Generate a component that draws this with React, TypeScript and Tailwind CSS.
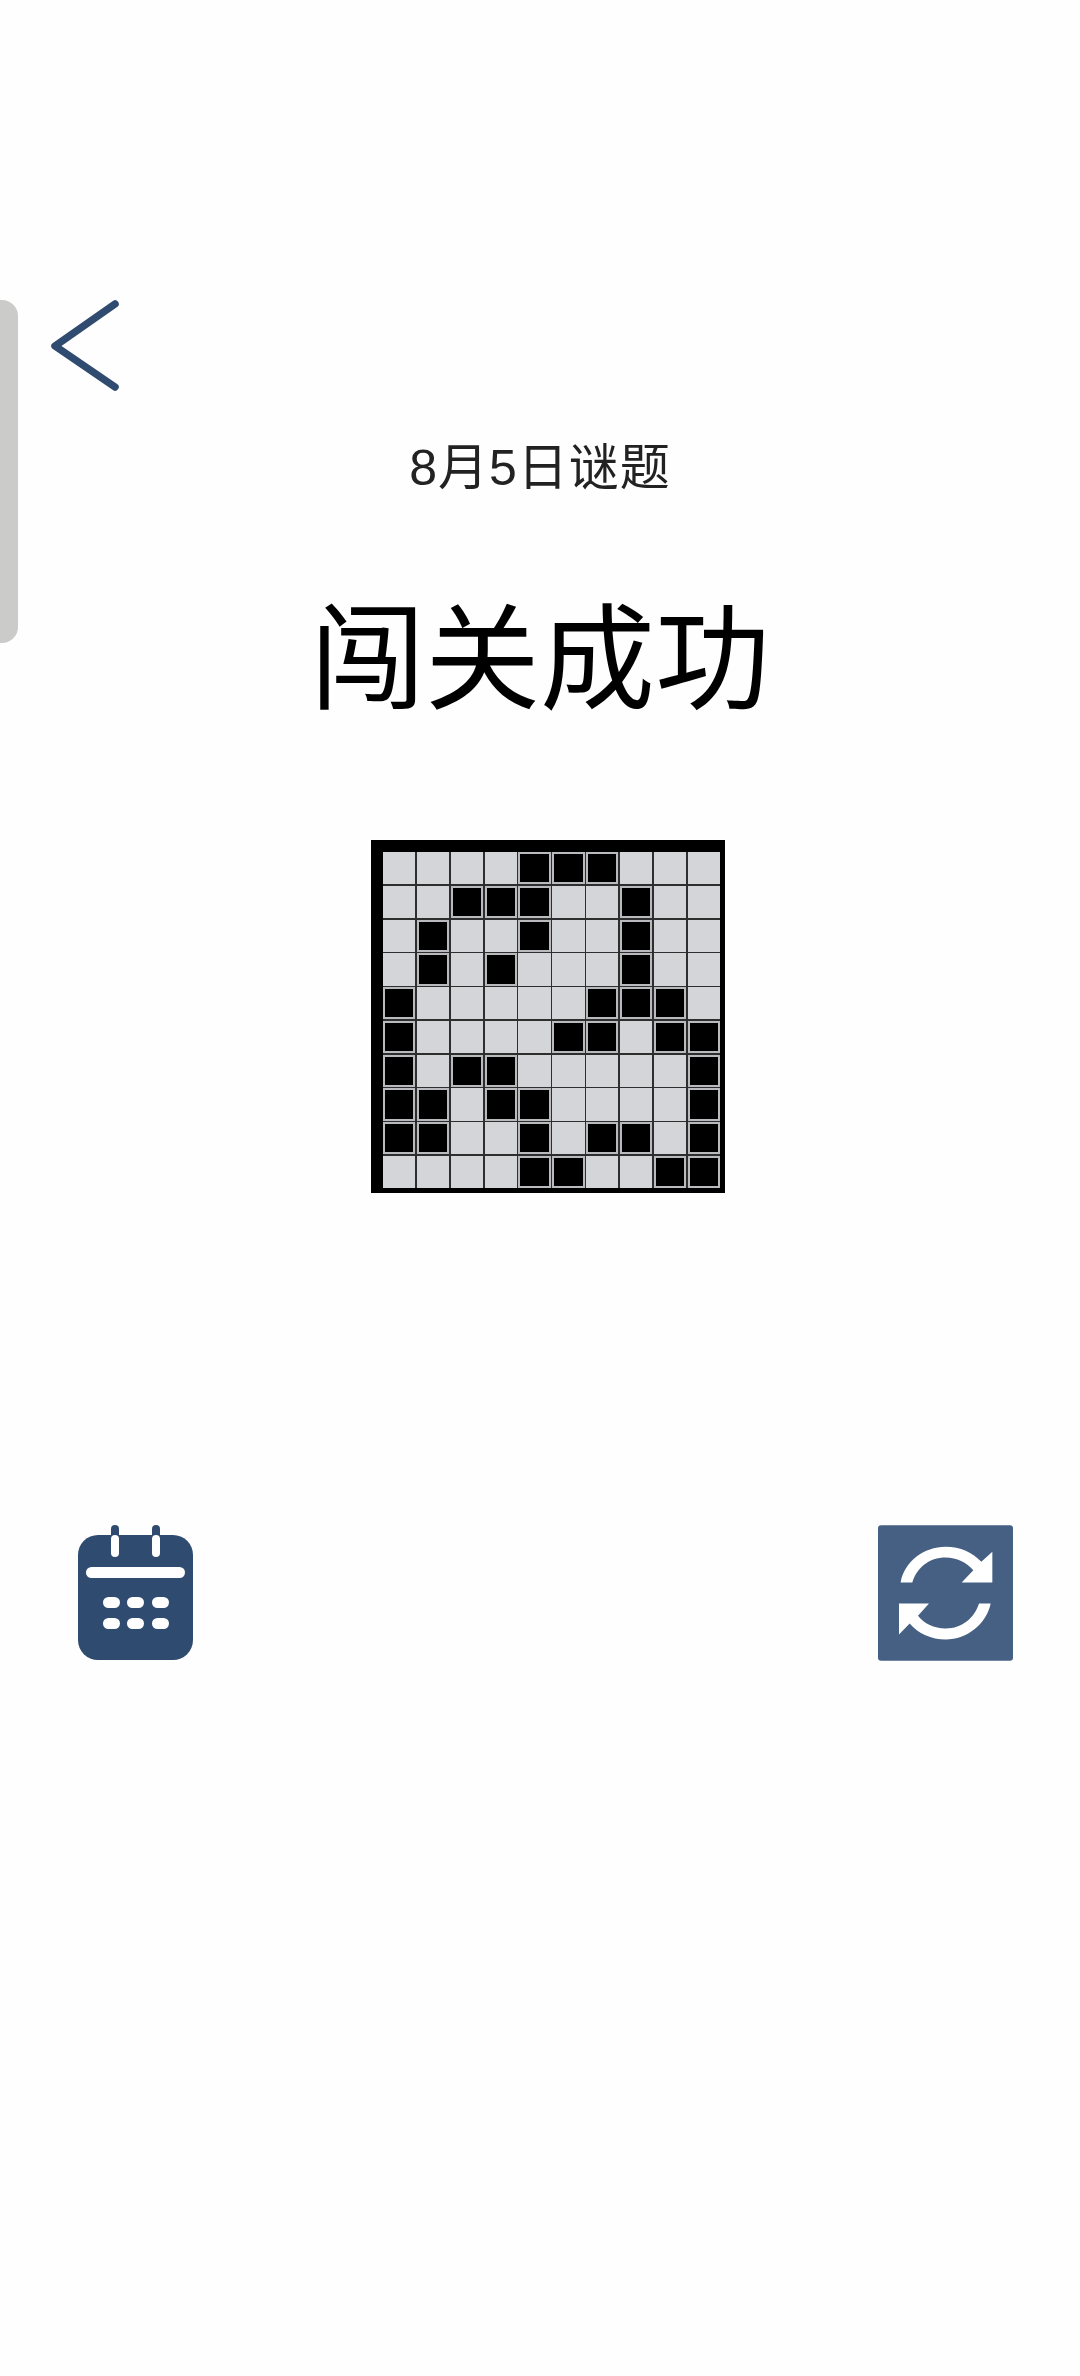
const filled: number[][] = [
  [4, 5, 6],
  [2, 3, 4, 7],
  [1, 4, 7],
  [1, 3, 7],
  [0, 6, 7, 8],
  [0, 5, 6, 8, 9],
  [0, 2, 3, 9],
  [0, 1, 3, 4, 9],
  [0, 1, 4, 6, 7, 9],
  [4, 5, 8, 9],
];

function Calendar() {
  return (
    <svg width="115" height="135" viewBox="0 0 115 135">
      <rect x="0" y="10" width="115" height="125" rx="20" fill="#2f4b70" />
      <rect x="33" y="0" width="8" height="32" rx="4" fill="#2f4b70" />
      <rect x="74" y="0" width="8" height="32" rx="4" fill="#2f4b70" />
      <rect x="33" y="10" width="8" height="22" rx="4" fill="#ffffff" />
      <rect x="74" y="10" width="8" height="22" rx="4" fill="#ffffff" />
      <rect x="8" y="42" width="99" height="11" rx="5.5" fill="#ffffff" />
      {[72, 93].map((y) =>
        [25, 49, 74].map((x) => (
          <rect key={`${x}-${y}`} x={x} y={y} width="17" height="11" rx="5.5" fill="#ffffff" />
        ))
      )}
    </svg>
  );
}

function Refresh() {
  return (
    <svg width="135" height="136" viewBox="52 75 405 407">
      <rect x="52" y="75" width="405" height="407" rx="9" fill="#466083" />
      <path
        fill="#ffffff"
        d="M120 247 C130 185 190 140 255 140 C300 140 335 157 362 185 L395 155 L395 247 L303 247 L338 210 C318 187 288 172 255 172 C205 172 168 203 155 247 Z"
      />
      <path
        fill="#ffffff"
        d="M390 310 C378 370 320 418 255 418 C212 418 172 400 147 370 L115 403 L115 310 L205 310 L172 347 C190 370 220 385 255 385 C305 385 342 352 355 310 Z"
      />
    </svg>
  );
}

export default function App() {
  return (
    <div
      className="relative flex h-[2376px] w-[1080px] flex-col overflow-hidden bg-[#fefefe] pt-[300px]"
      style={{ fontFamily: '"Liberation Sans", "Noto Sans CJK SC", sans-serif' }}
    >
      <div className="absolute left-0 top-[300px] h-[343px] w-[18px] rounded-r-[16px] bg-[#cbcbc9]" />

      <div className="ml-[50px] h-[92px] w-[70px]">
        <svg width="70" height="92" viewBox="0 0 70 92">
          <path
            d="M65 4 L5 46 L65 87"
            fill="none"
            stroke="#2f4b70"
            strokeWidth="7.5"
            strokeLinecap="round"
            strokeLinejoin="round"
          />
        </svg>
      </div>

      <div className="mt-[47px] text-center text-[50px] font-normal leading-[58px] tracking-[1px] text-[#222222]">
        8月5日谜题
      </div>

      <div className="mt-[93px] text-center text-[115px] font-normal leading-[140px] text-black">闯关成功</div>

      <div className="ml-[371px] mt-[110px] h-[353px] w-[354px] border-b-[5px] border-l-[12px] border-r-[5px] border-t-[12px] border-black">
        <div className="grid h-full w-full grid-cols-10 grid-rows-10 gap-[1.5px] bg-[#2e2e2e]">
          {filled.flatMap((row, r) =>
            Array.from({ length: 10 }, (_, c) => (
              <div
                key={`${r}-${c}`}
                className={row.includes(c) ? "border-2 border-[#b9babd] bg-black" : "bg-[#d4d5d9]"}
              />
            ))
          )}
        </div>
      </div>

      <div className="mt-[332px] flex items-start justify-between pl-[78px] pr-[67px]">
        <Calendar />
        <Refresh />
      </div>
    </div>
  );
}
